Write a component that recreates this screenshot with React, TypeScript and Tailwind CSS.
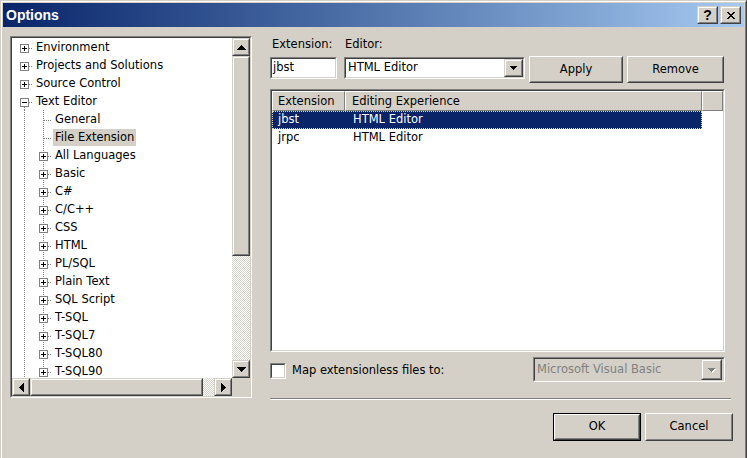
import React from "react";

type Kind = "plus" | "minus" | "leaf";
type Item = { label: string; level: 0 | 1; kind: Kind; sel?: boolean };

const items: Item[] = [
  { label: "Environment", level: 0, kind: "plus" },
  { label: "Projects and Solutions", level: 0, kind: "plus" },
  { label: "Source Control", level: 0, kind: "plus" },
  { label: "Text Editor", level: 0, kind: "minus" },
  { label: "General", level: 1, kind: "leaf" },
  { label: "File Extension", level: 1, kind: "leaf", sel: true },
  ...[
    "All Languages",
    "Basic",
    "C#",
    "C/C++",
    "CSS",
    "HTML",
    "PL/SQL",
    "Plain Text",
    "SQL Script",
    "T-SQL",
    "T-SQL7",
    "T-SQL80",
    "T-SQL90",
  ].map((label) => ({ label, level: 1 as const, kind: "plus" as const })),
];

// classic 3D frames
const Raised = (props: { className?: string; scroll?: boolean; children?: React.ReactNode }) => (
  <div
    className={`border bg-[#d4d0c8] border-r-[#404040] border-b-[#404040] ${
      props.scroll ? "border-t-[#d4d0c8] border-l-[#d4d0c8]" : "border-t-white border-l-white"
    } ${props.className ?? ""}`}
  >
    <div
      className={`flex h-full w-full items-center justify-center border border-r-[#808080] border-b-[#808080] ${
        props.scroll ? "border-t-white border-l-white" : "border-t-[#d4d0c8] border-l-[#d4d0c8]"
      }`}
    >
      {props.children}
    </div>
  </div>
);

const Sunken = (props: { className?: string; inner?: string; children?: React.ReactNode }) => (
  <div className={`border border-t-[#808080] border-l-[#808080] border-r-white border-b-white ${props.className ?? ""}`}>
    <div
      className={`h-full w-full border border-t-[#404040] border-l-[#404040] border-r-[#d4d0c8] border-b-[#d4d0c8] ${
        props.inner ?? ""
      }`}
    >
      {props.children}
    </div>
  </div>
);

const Tri = ({ dir, size = 5, color = "#000" }: { dir: "up" | "down" | "left" | "right"; size?: number; color?: string }) => {
  const rects = [];
  for (let i = 0; i < size; i++) {
    const len = 2 * i + 1;
    const off = size - 1 - i;
    if (dir === "up") rects.push(<rect key={i} x={off} y={i} width={len} height={1} />);
    if (dir === "down") rects.push(<rect key={i} x={off} y={size - 1 - i} width={len} height={1} />);
    if (dir === "left") rects.push(<rect key={i} x={i} y={off} width={1} height={len} />);
    if (dir === "right") rects.push(<rect key={i} x={size - 1 - i} y={off} width={1} height={len} />);
  }
  const horiz = dir === "up" || dir === "down";
  return (
    <svg width={horiz ? 2 * size - 1 : size} height={horiz ? size : 2 * size - 1} fill={color} shapeRendering="crispEdges">
      {rects}
    </svg>
  );
};

const Dots = (p: { x1: number; y1: number; x2: number; y2: number }) => (
  <line {...p} stroke="#808080" strokeDasharray="1 1" shapeRendering="crispEdges" />
);

const Box = ({ minus }: { minus?: boolean }) => (
  <g shapeRendering="crispEdges">
    <rect x={6.5} y={6.5} width={8} height={8} fill="#fff" stroke="#808080" />
    <rect x={8} y={10} width={5} height={1} fill="#000" />
    {!minus && <rect x={10} y={8} width={1} height={5} fill="#000" />}
  </g>
);

const TreeRow = ({ item }: { item: Item }) => (
  <div className="flex h-[18px] items-center pl-[2px]">
    {item.level === 0 ? (
      <svg width={19} height={18} className="shrink-0">
        {item.kind === "minus" && <Dots x1={10.5} y1={15} x2={10.5} y2={18} />}
        <Dots x1={15} y1={10.5} x2={19} y2={10.5} />
        <Box minus={item.kind === "minus"} />
      </svg>
    ) : (
      <>
        <svg width={19} height={18} className="shrink-0">
          <Dots x1={10.5} y1={0} x2={10.5} y2={18} />
        </svg>
        <svg width={19} height={18} className="shrink-0">
          <Dots x1={10.5} y1={0} x2={10.5} y2={18} />
          {item.kind === "leaf" ? (
            <Dots x1={11} y1={10.5} x2={19} y2={10.5} />
          ) : (
            <>
              <Dots x1={15} y1={10.5} x2={19} y2={10.5} />
              <Box />
            </>
          )}
        </svg>
      </>
    )}
    <span
      className={`ml-[1px] self-end whitespace-nowrap px-[2px] leading-[17px] ${item.sel ? "bg-[#d4d0c8]" : ""}`}
    >
      {item.label}
    </span>
  </div>
);

const Tree = () => (
  <Sunken className="h-[362px] w-[242px] shrink-0" inner="bg-white grid grid-cols-[1fr_18px] grid-rows-[1fr_18px]">
    <div className="overflow-hidden">
      {items.map((it) => (
        <TreeRow key={it.label} item={it} />
      ))}
    </div>
    <div className="flex flex-col">
      <Raised scroll className="h-[18px]">
        <Tri dir="up" />
      </Raised>
      <Raised scroll className="h-[200px]" />
      <div className="flex-1 bg-[image:repeating-conic-gradient(#ffffff_0_25%,#d4d0c8_0_50%)] bg-[length:2px_2px]" />
      <Raised scroll className="h-[18px]">
        <Tri dir="down" />
      </Raised>
    </div>
    <div className="flex">
      <Raised scroll className="w-[18px]">
        <Tri dir="left" />
      </Raised>
      <Raised scroll className="w-[173px]" />
      <div className="flex-1 bg-[image:repeating-conic-gradient(#ffffff_0_25%,#d4d0c8_0_50%)] bg-[length:2px_2px]" />
      <Raised scroll className="w-[18px]">
        <Tri dir="right" />
      </Raised>
    </div>
    <div className="bg-[#d4d0c8]" />
  </Sunken>
);

const ListView = () => (
  <Sunken className="mt-[6px] h-[263px] w-[455px]" inner="bg-white flex flex-col">
    <div className="flex h-[20px]">
      <div className="w-[73px] border border-t-white border-l-white border-r-[#808080] border-b-[#808080] bg-[#d4d0c8] pl-[5px] leading-[19px]">
        Extension
      </div>
      <div className="w-[357px] border border-t-white border-l-white border-r-[#808080] border-b-[#808080] bg-[#d4d0c8] pl-[6px] leading-[19px]">
        Editing Experience
      </div>
      <div className="flex-1 border border-t-white border-l-white border-r-[#808080] border-b-[#808080] bg-[#d4d0c8]" />
    </div>
    <div className="flex h-[18px] w-[430px] items-center bg-[#0a246a] text-white outline-1 -outline-offset-1 outline-dotted outline-[#e8dfa0]">
      <span className="w-[74px] pl-[6px]">jbst</span>
      <span className="pl-[7px]">HTML Editor</span>
    </div>
    <div className="flex h-[18px] w-[430px] items-center">
      <span className="w-[74px] pl-[6px]">jrpc</span>
      <span className="pl-[7px]">HTML Editor</span>
    </div>
  </Sunken>
);

const RightPane = () => (
  <div className="flex h-[364px] w-[461px] flex-col">
    <div className="flex h-[20px] items-start leading-[17px]">
      <span className="w-[74px] pl-[2px]">Extension:</span>
      <span className="pl-[1px]">Editor:</span>
    </div>
    <div className="flex h-[27px] items-start">
      <Sunken className="mt-[1px] h-[22px] w-[67px]" inner="bg-white flex items-center pl-[1px]">
        jbst
      </Sunken>
      <Sunken className="mt-[1px] ml-[7px] h-[22px] w-[181px]" inner="bg-white flex items-center">
        <span className="flex-1 pl-[2px]">HTML Editor</span>
        <Raised scroll className="h-full w-[19px]">
          <Tri dir="down" size={4} />
        </Raised>
      </Sunken>
      <Raised className="ml-[4px] h-[27px] w-[94px]">Apply</Raised>
      <Raised className="ml-[4px] h-[27px] w-[97px]">Remove</Raised>
    </div>
    <ListView />
    <div className="mt-[5px] flex h-[25px] items-center">
      <Sunken className="mt-[3px] h-[16px] w-[16px]" inner="bg-white" />
      <span className="ml-[6px] mt-[3px]">Map extensionless files to:</span>
      <Sunken className="ml-auto mr-[6px] h-[25px] w-[192px]" inner="bg-[#d4d0c8] flex items-center">
        <span className="flex-1 pl-[2px] text-[#808080]">Microsoft Visual Basic</span>
        <Raised scroll className="mr-[1px] h-[21px] w-[21px]">
          <div className="relative">
            <div className="absolute left-[1px] top-[1px]">
              <Tri dir="down" size={4} color="#ffffff" />
            </div>
            <div className="relative">
              <Tri dir="down" size={4} color="#808080" />
            </div>
          </div>
        </Raised>
      </Sunken>
    </div>
    <div className="mt-auto h-[2px] border-t border-b border-t-[#808080] border-b-white" />
  </div>
);

const TitleBar = () => (
  <div className="flex h-[24px] shrink-0 items-center justify-between bg-linear-to-r from-[#0a246a] to-[#a6caf0] pl-[3px] pr-[3px]">
    <span className="font-['Liberation_Sans',sans-serif] text-[14px] font-bold text-white">Options</span>
    <div className="flex gap-[1px]">
      <Raised scroll className="h-[18px] w-[21px]">
        <span className="font-['Liberation_Sans',sans-serif] text-[14px] font-bold leading-none">?</span>
      </Raised>
      <Raised scroll className="ml-[1px] h-[18px] w-[21px]">
        <svg width={8} height={7} shapeRendering="crispEdges">
          {[0, 1, 2, 3, 4, 5, 6].map((i) => (
            <g key={i}>
              <rect x={i === 6 ? 6 : i} y={i} width={2} height={1} />
              <rect x={6 - i} y={i} width={2} height={1} />
            </g>
          ))}
        </svg>
      </Raised>
    </div>
  </div>
);

export default function App() {
  return (
    <div className="h-[458px] w-[747px] overflow-hidden bg-[#d4d0c8] font-['DejaVu_Sans',sans-serif] text-[11.5px] text-black">
      <div className="h-[470px] border border-t-[#d4d0c8] border-l-[#d4d0c8] border-r-[#404040] border-b-[#404040]">
        <div className="flex h-full flex-col border border-t-white border-l-white border-r-[#808080] border-b-[#808080] p-[1px]">
          <TitleBar />
          <div className="flex flex-col pl-[7px]">
            <div className="mt-[9px] flex gap-[18px]">
              <Tree />
              <RightPane />
            </div>
            <div className="mt-[13px] flex justify-end gap-[4px] pr-[11px]">
              <div className="h-[28px] w-[88px] border border-black">
                <Raised className="h-full w-full">OK</Raised>
              </div>
              <Raised className="h-[28px] w-[88px]">Cancel</Raised>
            </div>
          </div>
        </div>
      </div>
    </div>
  );
}
